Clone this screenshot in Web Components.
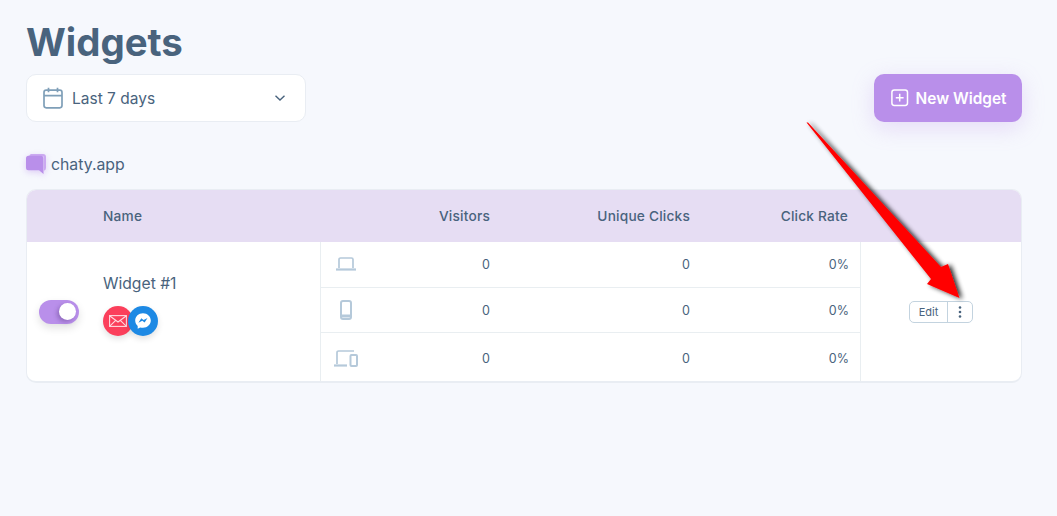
<!DOCTYPE html>
<html><head><meta charset="utf-8"><style>
html,body{margin:0;padding:0;background:#f6f8fd;}
body{font-family:Inter,"Open Sans",sans-serif;color:#49637d;width:1057px;height:516px;overflow:hidden;position:relative}
</style></head><body>
<widgets-page></widgets-page>
<script>
const def=(n,html)=>{customElements.define(n,class extends HTMLElement{constructor(){super();this.attachShadow({mode:'open'}).innerHTML=html;}})};
def('date-select',`<style>:host{display:flex;align-items:center;box-sizing:border-box;width:280px;height:48px;background:#fff;border:1px solid #e9edf3;border-radius:10px;padding:0 19px 0 16px;font-size:15.500px;color:#49637d}
svg{display:block}span{margin:1px 0 0 9px;flex:1}</style>
<svg width="20" height="22" viewBox="0 0 20 22" fill="none" stroke="#7f9fb8" stroke-width="1.700"><rect x="1" y="3.200" width="18" height="17.600" rx="2.200"/><path d="M1 8.600h18M5.500 .8v4.400M14.500 .8v4.400"/></svg><span>Last 7 days</span>
<svg width="12" height="8" viewBox="0 0 12 8" fill="none" stroke="#49637d" stroke-width="1.400"><path d="M1.500 1.800 6 6l4.500-4.200"/></svg>`);
def('new-button',`<style>:host{display:flex;align-items:center;justify-content:center;gap:7px;box-sizing:border-box;width:148px;height:48px;padding-left:1px;border-radius:10px;background:#b98fea;color:#fff;font-weight:600;font-size:15.400px;box-shadow:0 6px 22px rgba(185,143,234,.28)}svg{display:block}.x{margin-top:1px}</style>
<svg width="18" height="18" viewBox="0 0 18 18" fill="none" stroke="#fff" stroke-width="1.500"><rect x=".9" y=".9" width="15.600" height="15.600" rx="2.400"/><path d="M8.700 4.800v7.800M4.800 8.700h7.800"/></svg><span class="x"><slot></slot></span>`);
def('site-label',`<style>:host{display:flex;align-items:center;height:24px;gap:5px;font-size:15.800px;color:#49637d}svg{display:block;filter:drop-shadow(0 2px 3px rgba(185,143,234,.4))}</style>
<svg width="20" height="21" viewBox="0 0 20 21"><path fill="#cba9f1" d="M5 0h12a3 3 0 0 1 3 3v11a3 3 0 0 1-2 2.800V4a2 2 0 0 0-2-2H3.200A3 3 0 0 1 5 0z"/><path fill="#b98fea" d="M2.500 1.800h12.500a2.500 2.500 0 0 1 2.500 2.500v15.700l-4.500-3.800H2.500A2.500 2.500 0 0 1 0 13.700V4.300a2.500 2.500 0 0 1 2.500-2.500z"/></svg><slot></slot>`);
def('toggle-switch',`<style>:host{display:block;position:relative;width:40px;height:24px;border-radius:12px;background:#b98fea;box-shadow:0 4px 8px rgba(0,0,0,.12)}i{position:absolute;right:3px;top:3.500px;width:17px;height:17px;border-radius:50%;background:#fff;box-shadow:-2px 2px 4px rgba(70,40,110,.35)}</style><i></i>`);
def('channel-icons',`<style>:host{display:flex;margin-top:13px}b{display:flex;align-items:center;justify-content:center;width:30px;height:30px;border-radius:50%;box-shadow:0 3px 6px rgba(0,0,0,.12)}b+b{margin-left:-5px}svg{display:block}</style>
<b style="background:#fb3f5b"><svg width="18" height="12" viewBox="0 0 18 12" fill="none" stroke="#ffd9df" stroke-width="1.100"><rect x=".6" y=".6" width="16.800" height="10.800"/><path d="M.6.800 9 7l8.400-6.200M.8 11.200l5.900-5.800M17.200 11.200l-5.900-5.800"/></svg></b>
<b style="background:#1d89e4"><svg width="18" height="18" viewBox="0 0 18 18"><path fill="#fff" d="M9 1.200C4.600 1.200 1.200 4.400 1.200 8.600c0 2.200.9 4.100 2.500 5.400v2.800l2.500-1.400c.9.300 1.800.4 2.800.4 4.400 0 7.800-3.200 7.800-7.200S13.400 1.200 9 1.200z"/><path fill="#1d89e4" d="m4.400 10.800 2.900-4.500 2.300 1.800 3.900-2-2.900 4.500-2.300-1.800z"/></svg></b>`);
def('edit-group',`<style>:host{display:flex;box-sizing:border-box;height:22px;width:64px;border:1px solid #c3d3df;border-radius:5px;background:#fff;font-size:11px;color:#49637d}span{width:37px;display:flex;align-items:center;justify-content:center;border-right:1px solid #c3d3df}i{flex:1;display:flex;align-items:center;justify-content:center}svg{display:block}</style><span>Edit</span><i><svg width="4" height="12" viewBox="0 0 4 12" fill="#49637d"><circle cx="2" cy="1.500" r="1.300"/><circle cx="2" cy="6" r="1.300"/><circle cx="2" cy="10.500" r="1.300"/></svg></i>`);
def('stat-row',`<style>:host{display:grid;grid-template-columns:69px 100px 200px 159px;align-items:center;font-size:12.500px;color:#49637d;box-sizing:border-box;border-bottom:1px solid #e9eef1}:host(:last-child){border-bottom:0;padding-top:2px}:host(:first-child){padding-bottom:1px}
.i{padding-left:15px;display:flex}.n{text-align:right}</style><div class="i"><slot name="icon"></slot></div><div class="n"><slot name="a"></slot></div><div class="n"><slot name="b"></slot></div><div class="n"><slot name="c"></slot></div>`);
def('widget-table',`<style>:host{display:block;box-sizing:border-box;width:996px;background:#fff;border:1px solid #e9edf3;border-bottom-width:2px;border-radius:10px;overflow:hidden}
.h{display:grid;grid-template-columns:294px 69px 100px 200px 158px;height:52px;align-items:center;background:#e6ddf3;font-size:13.700px;letter-spacing:.2px;font-weight:500;color:#49637d}.h div{text-align:right}.h .nm{text-align:left;padding-left:76px}
.b{display:grid;grid-template-columns:294px 540px 160px;height:139px}
.l{display:flex;border-right:1px solid #e9eef1;align-items:center;box-sizing:border-box}.tg{padding-left:12px}.nmc{margin-left:24px;margin-top:-13px;font-size:15.700px}
.m{display:grid;grid-template-rows:46px 45px 48px;border-right:1px solid #e9eef1}
.a{display:flex;align-items:center;justify-content:center;padding-top:1px}
svg{display:block}</style>
<div class="h"><div class="nm">Name</div><span></span><div>Visitors</div><div>Unique Clicks</div><div>Click Rate</div></div>
<div class="b"><div class="l"><div class="tg"><toggle-switch></toggle-switch></div><div class="nmc">Widget #1<channel-icons></channel-icons></div></div>
<div class="m">
<stat-row><svg slot="icon" width="20" height="14" viewBox="0 0 20 14" fill="none" stroke="#b5c9da" stroke-width="1.700"><path d="M3 11V2.500A1.500 1.500 0 0 1 4.500 1h11A1.500 1.500 0 0 1 17 2.500V11"/><path d="M0 12.500h20" stroke-width="2.200"/></svg><span slot="a">0</span><span slot="b">0</span><span slot="c">0%</span></stat-row>
<stat-row><svg slot="icon" width="12" height="20" viewBox="0 0 12 20" style="margin-left:4px" fill="none" stroke="#b5c9da" stroke-width="2"><rect x="1" y="1" width="10" height="18" rx="2"/><path d="M1 16h10" stroke-width="3"/></svg><span slot="a">0</span><span slot="b">0</span><span slot="c">0%</span></stat-row>
<stat-row><svg slot="icon" width="24" height="17" viewBox="0 0 24 17" style="margin-left:-2px" fill="none" stroke="#b5c9da" stroke-width="1.700"><path d="M3 14V2.600A1.600 1.600 0 0 1 4.600 1H20"/><path d="M0 15.500h13" stroke-width="2.200"/><rect x="16.500" y="5" width="6.500" height="11" rx="1" stroke-width="2"/></svg><span slot="a">0</span><span slot="b">0</span><span slot="c">0%</span></stat-row>
</div>
<div class="a"><edit-group></edit-group></div></div>`);
def('red-arrow',`<style>:host{position:absolute;left:0;top:0;width:1057px;height:516px;pointer-events:none}svg{display:block}</style>
<svg width="1057" height="516" viewBox="0 0 1057 516"><defs><filter id="s" x="-20%" y="-20%" width="140%" height="140%"><feGaussianBlur in="SourceAlpha" stdDeviation="2.500"/><feOffset dx="3" dy="1"/><feComponentTransfer><feFuncA type="linear" slope=".85"/></feComponentTransfer><feMerge><feMergeNode/><feMergeNode in="SourceGraphic"/></feMerge></filter></defs>
<polygon filter="url(#s)" fill="#ff0000" points="806.500,122.500 808,122.500 941,267 948,264 959.500,298 927,284 931,279"/></svg>`);
def('widgets-page',`<style>:host{display:block;box-sizing:border-box;width:1057px;padding:20px 0 0 26px}
h1{margin:0;font-size:38.400px;line-height:44px;font-weight:700;color:#49637d}
.t{display:flex;justify-content:space-between;align-items:center;width:996px;margin-top:10px}
site-label{margin-top:30px}widget-table{margin:13px 0 0 0}</style>
<h1>Widgets</h1><div class="t"><date-select></date-select><new-button>New Widget</new-button></div>
<site-label>chaty.app</site-label><widget-table></widget-table><red-arrow></red-arrow>`);
</script></body></html>
